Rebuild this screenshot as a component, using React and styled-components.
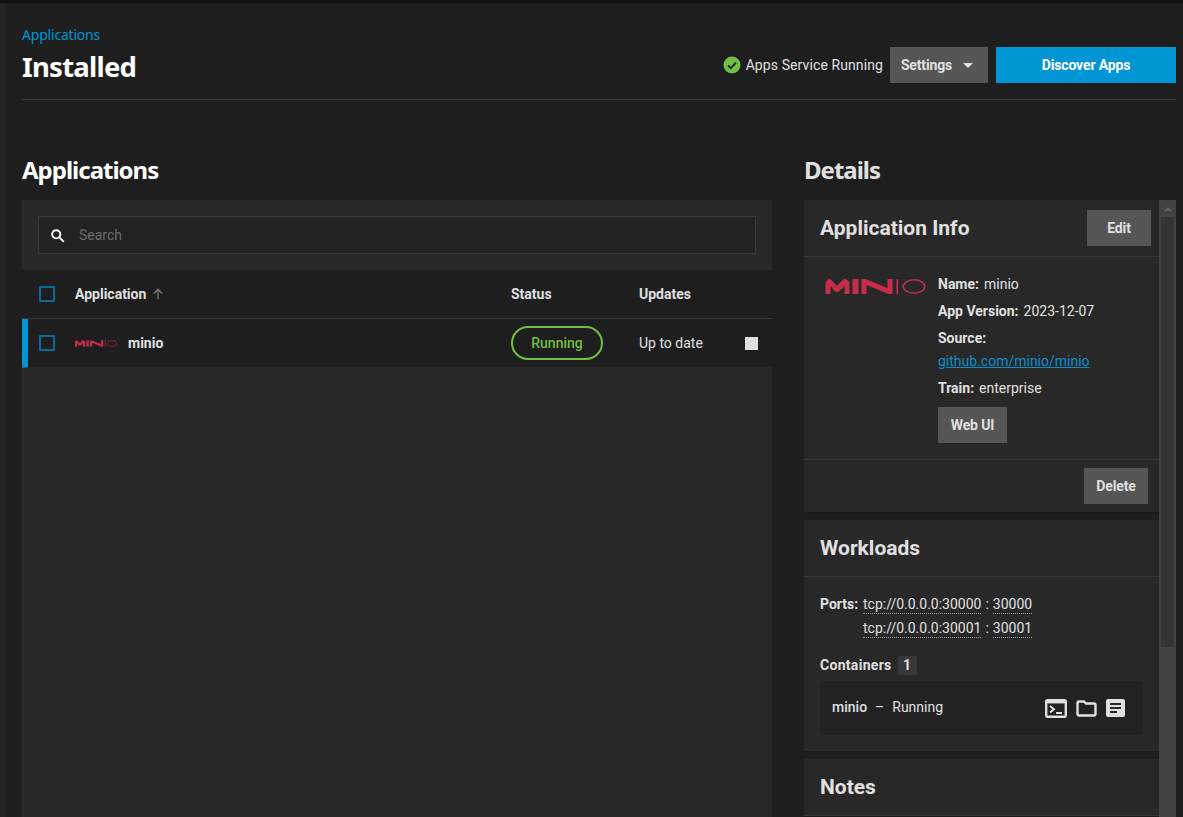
import React from "react";
import styled, { createGlobalStyle } from "styled-components";

const Global = createGlobalStyle`
  html, body { margin: 0; padding: 0; height: 100%; overflow: hidden; background: #1e1e1e; }
  * { box-sizing: border-box; }
  body { font-family: Roboto, "Liberation Sans", sans-serif; color: #e0e0e0; }
`;

const titleFont = `"Noto Sans", "Open Sans", sans-serif`;

const Shell = styled.div`
  height: 817px;
  display: flex;
  flex-direction: column;
  overflow: hidden;
`;
const TopEdge = styled.div`
  height: 3px;
  flex: none;
  background: #111111;
`;
const Body = styled.div`
  flex: 1;
  min-height: 0;
  display: flex;
`;
const SideEdge = styled.div`
  width: 6px;
  flex: none;
  background: #232323;
`;
const Main = styled.main`
  flex: 1;
  min-width: 0;
  padding: 0 7px 0 16px;
  display: flex;
  flex-direction: column;
`;
const PageHeader = styled.header`
  height: 97px;
  flex: none;
  display: flex;
  align-items: flex-start;
  justify-content: space-between;
  border-bottom: 1px solid #383838;
`;
const Crumbs = styled.div`
  display: flex;
  flex-direction: column;
  padding-top: 23px;
`;
const Crumb = styled.a`
  font-family: ${titleFont};
  font-size: 14px;
  line-height: 18px;
  color: #0095d5;
  letter-spacing: -0.2px;
`;
const PageTitle = styled.h1`
  margin: 5px 0 0;
  font-family: ${titleFont};
  font-size: 27.5px;
  line-height: 36px;
  font-weight: 700;
  letter-spacing: -0.75px;
  color: #ffffff;
`;
const Actions = styled.div`
  display: flex;
  align-items: center;
  margin-top: 44px;
`;
const ServiceState = styled.div`
  display: flex;
  align-items: center;
  gap: 5px;
  margin-right: 7px;
  font-size: 14px;
  letter-spacing: 0.1px;
  color: #e0e0e0;
`;
const Button = styled.button`
  height: 36px;
  width: ${(p) => p.$w}px;
  border: 0;
  border-radius: 0;
  padding: 0;
  display: inline-flex;
  align-items: center;
  justify-content: center;
  gap: ${(p) => p.$gap || 0}px;
  background: ${(p) => (p.$primary ? "#0095d5" : "#565656")};
  color: ${(p) => (p.$primary ? "#ffffff" : "#e0e0e0")};
  font-family: Roboto, sans-serif;
  font-size: 14px;
  font-weight: 700;
  letter-spacing: -0.15px;
`;
const Gap = styled.span`
  width: 8px;
  flex: none;
`;
const Caret = styled.span`
  width: 0;
  height: 0;
  margin-right: 4px;
  border-left: 5px solid transparent;
  border-right: 5px solid transparent;
  border-top: 5px solid #e0e0e0;
`;
const Columns = styled.div`
  flex: 1;
  min-height: 0;
  display: flex;
  gap: 32px;
  padding-top: 49px;
`;
const LeftCol = styled.section`
  width: 750px;
  flex: none;
  display: flex;
  flex-direction: column;
  min-height: 0;
`;
const RightCol = styled.section`
  flex: 1;
  min-width: 0;
  display: flex;
  flex-direction: column;
  min-height: 0;
`;
const SectionTitle = styled.h2`
  margin: 0;
  height: 51px;
  padding-top: 3px;
  font-family: ${titleFont};
  font-size: 24px;
  line-height: 36px;
  font-weight: 700;
  letter-spacing: -1px;
  color: ${(p) => (p.$dim ? "#e0e0e0" : "#ffffff")};
`;
const AppsCard = styled.div`
  flex: 1;
  background: #282828;
  display: flex;
  flex-direction: column;
`;
const SearchBar = styled.div`
  height: 70px;
  flex: none;
  padding: 16px;
`;
const SearchBox = styled.div`
  height: 38px;
  display: flex;
  align-items: center;
  gap: 14px;
  padding-left: 11px;
  background: #222222;
  border: 1px solid #383838;
  font-size: 14px;
  color: #6e6e6e;
`;
const TableHead = styled.div`
  height: 49px;
  flex: none;
  display: grid;
  grid-template-columns: 472px 128px 1fr;
  align-items: center;
  padding-left: 17px;
  background: #1e1e1e;
  border-bottom: 1px solid #383838;
  font-size: 14px;
  font-weight: 700;
  color: #e0e0e0;
`;
const TableRow = styled.div`
  height: 49px;
  flex: none;
  display: grid;
  grid-template-columns: 472px 128px 1fr;
  align-items: center;
  padding-left: 11px;
  padding-right: 14px;
  background: #1e1e1e;
  border-left: 6px solid #0095d5;
  border-bottom: 1px solid #282828;
  font-size: 14px;
`;
const NameCell = styled.div`
  display: flex;
  align-items: center;
`;
const Check = styled.span`
  width: 16px;
  height: 16px;
  flex: none;
  border: 2px solid #0b6a98;
  border-radius: 1px;
  margin-right: 20px;
`;
const HeadName = styled.span`
  margin-right: 5px;
`;
const RowName = styled.span`
  font-weight: 700;
  margin-left: 11px;
`;
const Pill = styled.span`
  width: 92px;
  height: 34px;
  border: 2px solid #71bf44;
  border-radius: 17px;
  display: flex;
  align-items: center;
  justify-content: center;
  font-weight: 500;
  color: #71bf44;
`;
const UpdateCell = styled.div`
  display: flex;
  align-items: center;
  justify-content: space-between;
  color: #e0e0e0;
  font-size: 14px;
`;
const StopIcon = styled.span`
  width: 13px;
  height: 13px;
  background: #e0e0e0;
`;
const DetailsPane = styled.div`
  flex: 1;
  min-height: 0;
  display: flex;
`;
const Cards = styled.div`
  flex: 1;
  min-width: 0;
  display: flex;
  flex-direction: column;
  gap: 7px;
  overflow: hidden;
`;
const Card = styled.article`
  flex: none;
  background: #282828;
  border-bottom: 1px solid #1a1a1a;
`;
const CardHead = styled.div`
  height: 57px;
  display: flex;
  align-items: center;
  justify-content: space-between;
  padding: 0 8px 0 16px;
  border-bottom: 1px solid #383838;
`;
const CardTitle = styled.h3`
  margin: 0;
  font-family: Roboto, sans-serif;
  font-size: 21px;
  font-weight: 700;
  color: #e0e0e0;
`;
const InfoBody = styled.div`
  height: 203px;
  display: flex;
  padding: 14px 16px 0 21px;
  border-bottom: 1px solid #383838;
`;
const LogoSlot = styled.div`
  width: 113px;
  flex: none;
  padding-top: 8px;
`;
const InfoLines = styled.div`
  display: flex;
  flex-direction: column;
  font-size: 14px;
`;
const InfoLine = styled.div`
  height: 27px;
  line-height: 27px;
  white-space: nowrap;
  margin-top: ${(p) => (p.$tight ? "-4px" : "0")};
`;
const Label = styled.b`
  font-weight: 700;
  margin-right: 5px;
`;
const LinkText = styled.a`
  color: #0a8fcc;
  text-decoration: underline;
`;
const WebUiSlot = styled.div`
  margin-top: 5px;
`;
const CardFoot = styled.div`
  height: 52px;
  display: flex;
  align-items: center;
  justify-content: flex-end;
  padding: 0 11px;
`;
const WorkBody = styled.div`
  height: 174px;
  padding: 15px 16px 0;
  font-size: 14px;
`;
const PortRow = styled.div`
  display: flex;
  height: 24px;
  line-height: 24px;
`;
const PortLabel = styled.b`
  width: 43px;
  flex: none;
  font-weight: 700;
`;
const Dotted = styled.span`
  border-bottom: 1px dotted #9a9a9a;
  height: 19px;
  line-height: 19px;
  align-self: center;
`;
const Colon = styled.span`
  margin: 0 4px;
`;
const ContHead = styled.div`
  display: flex;
  align-items: center;
  gap: 6px;
  margin-top: 15px;
  height: 20px;
  font-weight: 700;
  letter-spacing: 0.3px;
`;
const Badge = styled.span`
  width: 19px;
  height: 19px;
  display: flex;
  align-items: center;
  justify-content: center;
  background: #383838;
  border-radius: 2px;
`;
const ContRow = styled.div`
  margin-top: 6px;
  height: 54px;
  background: #222222;
  display: flex;
  align-items: center;
  justify-content: space-between;
  padding: 0 18px 0 12px;
  font-size: 14px;
`;
const ContName = styled.div`
  display: flex;
  gap: 8px;
  margin-top: -2px;
`;
const Medium = styled.span`
  font-weight: 500;
`;
const IconRow = styled.div`
  display: flex;
  align-items: center;
  gap: 9px;
`;
const ScrollTrack = styled.div`
  width: 17px;
  flex: none;
  display: flex;
  flex-direction: column;
  background: #424242;
  padding: 0 2px;
`;
const ScrollArrow = styled.div`
  height: 17px;
  flex: none;
  display: flex;
  align-items: center;
  justify-content: center;
  &::before {
    content: "";
    border-left: 4px solid transparent;
    border-right: 4px solid transparent;
    border-bottom: 4px solid #666666;
  }
`;
const ScrollThumb = styled.div`
  height: 430px;
  flex: none;
  background: #333333;
`;

function MinioLogo({ w, h }) {
  return (
    <svg width={w} height={h} viewBox="0 0 100 15" fill="#c72c48">
      <path d="M0 15V3L3 0h2l6.5 7L18 0h2l4 3v12h-5V7l-6 6h-3L5 7v8z" />
      <rect x="27" y="0" width="6" height="15" />
      <path d="M36 15V0h4l22 9V0h5v15h-4L41 6v9z" />
      <rect x="71" y="0" width="1.6" height="15" />
      <ellipse cx="88.5" cy="7.5" rx="10.8" ry="6.7" fill="none" stroke="#c72c48" strokeWidth="1.5" />
    </svg>
  );
}

const SearchIcon = () => (
  <svg width="15" height="15" viewBox="0 0 24 24" fill="none" stroke="#fff" strokeWidth="3">
    <circle cx="10" cy="10" r="6.5" />
    <path d="M15 15l7 7" />
  </svg>
);

const ArrowUp = () => (
  <svg width="14" height="14" viewBox="0 0 24 24" fill="none" stroke="#777" strokeWidth="2.4">
    <path d="M12 21V4M5 11l7-7 7 7" />
  </svg>
);

const OkIcon = () => (
  <svg width="18" height="18" viewBox="0 0 18 18">
    <circle cx="9" cy="9" r="8.5" fill="#71bf44" />
    <path d="M5 9.3l2.8 2.8L13 6.6" fill="none" stroke="#1e1e1e" strokeWidth="1.8" />
  </svg>
);

const ShellIcon = () => (
  <svg width="22" height="19" viewBox="0 0 22 19">
    <rect x="1.2" y="1.2" width="19.6" height="16.6" rx="1.5" fill="none" stroke="#e0e0e0" strokeWidth="2.4" />
    <rect x="1" y="1" width="20" height="3.4" fill="#e0e0e0" />
    <path d="M5 7l4 3.2-4 3.2" fill="none" stroke="#e0e0e0" strokeWidth="2" />
    <path d="M11 14h6" stroke="#e0e0e0" strokeWidth="2" />
  </svg>
);

const FolderIcon = () => (
  <svg width="21" height="17" viewBox="0 0 21 17">
    <path d="M1.5 3a1.5 1.5 0 0 1 1.5-1.5h5l2 2h8a1.5 1.5 0 0 1 1.5 1.5v9a1.5 1.5 0 0 1-1.5 1.5H3A1.5 1.5 0 0 1 1.5 14z" fill="none" stroke="#e0e0e0" strokeWidth="2.4" />
  </svg>
);

const LogsIcon = () => (
  <svg width="19" height="18" viewBox="0 0 19 18">
    <rect width="19" height="18" rx="2" fill="#e0e0e0" />
    <path d="M4 5h11M4 9h11M4 13h7" stroke="#262626" strokeWidth="1.8" />
  </svg>
);

export default function App() {
  return (
    <Shell>
      <Global />
      <TopEdge />
      <Body>
        <SideEdge />
        <Main>
          <PageHeader>
            <Crumbs>
              <Crumb>Applications</Crumb>
              <PageTitle>Installed</PageTitle>
            </Crumbs>
            <Actions>
              <ServiceState>
                <OkIcon />
                Apps Service Running
              </ServiceState>
              <Button $w={98} $gap={11}>
                Settings <Caret />
              </Button>
              <Gap />
              <Button $w={180} $primary>
                Discover Apps
              </Button>
            </Actions>
          </PageHeader>
          <Columns>
            <LeftCol>
              <SectionTitle>Applications</SectionTitle>
              <AppsCard>
                <SearchBar>
                  <SearchBox>
                    <SearchIcon />
                    Search
                  </SearchBox>
                </SearchBar>
                <TableHead>
                  <NameCell>
                    <Check />
                    <HeadName>Application</HeadName>
                    <ArrowUp />
                  </NameCell>
                  <span>Status</span>
                  <span>Updates</span>
                </TableHead>
                <TableRow>
                  <NameCell>
                    <Check />
                    <MinioLogo w={42} h={7} />
                    <RowName>minio</RowName>
                  </NameCell>
                  <Pill>Running</Pill>
                  <UpdateCell>
                    Up to date
                    <StopIcon />
                  </UpdateCell>
                </TableRow>
              </AppsCard>
            </LeftCol>
            <RightCol>
              <SectionTitle $dim>Details</SectionTitle>
              <DetailsPane>
                <Cards>
                  <Card>
                    <CardHead>
                      <CardTitle>Application Info</CardTitle>
                      <Button $w={64}>Edit</Button>
                    </CardHead>
                    <InfoBody>
                      <LogoSlot>
                        <MinioLogo w={101} h={15} />
                      </LogoSlot>
                      <InfoLines>
                        <InfoLine>
                          <Label>Name:</Label>minio
                        </InfoLine>
                        <InfoLine>
                          <Label>App Version:</Label>2023-12-07
                        </InfoLine>
                        <InfoLine>
                          <Label>Source:</Label>
                        </InfoLine>
                        <InfoLine $tight>
                          <LinkText>github.com/minio/minio</LinkText>
                        </InfoLine>
                        <InfoLine>
                          <Label>Train:</Label>enterprise
                        </InfoLine>
                        <WebUiSlot>
                          <Button $w={69}>Web UI</Button>
                        </WebUiSlot>
                      </InfoLines>
                    </InfoBody>
                    <CardFoot>
                      <Button $w={64}>Delete</Button>
                    </CardFoot>
                  </Card>
                  <Card>
                    <CardHead>
                      <CardTitle>Workloads</CardTitle>
                    </CardHead>
                    <WorkBody>
                      <PortRow>
                        <PortLabel>Ports:</PortLabel>
                        <Dotted>tcp://0.0.0.0:30000</Dotted>
                        <Colon>:</Colon>
                        <Dotted>30000</Dotted>
                      </PortRow>
                      <PortRow>
                        <PortLabel />
                        <Dotted>tcp://0.0.0.0:30001</Dotted>
                        <Colon>:</Colon>
                        <Dotted>30001</Dotted>
                      </PortRow>
                      <ContHead>
                        Containers <Badge>1</Badge>
                      </ContHead>
                      <ContRow>
                        <ContName>
                          <Medium>minio</Medium>
                          <span>–</span>
                          <span>Running</span>
                        </ContName>
                        <IconRow>
                          <ShellIcon />
                          <FolderIcon />
                          <LogsIcon />
                        </IconRow>
                      </ContRow>
                    </WorkBody>
                  </Card>
                  <Card>
                    <CardHead>
                      <CardTitle>Notes</CardTitle>
                    </CardHead>
                  </Card>
                </Cards>
                <ScrollTrack>
                  <ScrollArrow />
                  <ScrollThumb />
                </ScrollTrack>
              </DetailsPane>
            </RightCol>
          </Columns>
        </Main>
      </Body>
    </Shell>
  );
}
